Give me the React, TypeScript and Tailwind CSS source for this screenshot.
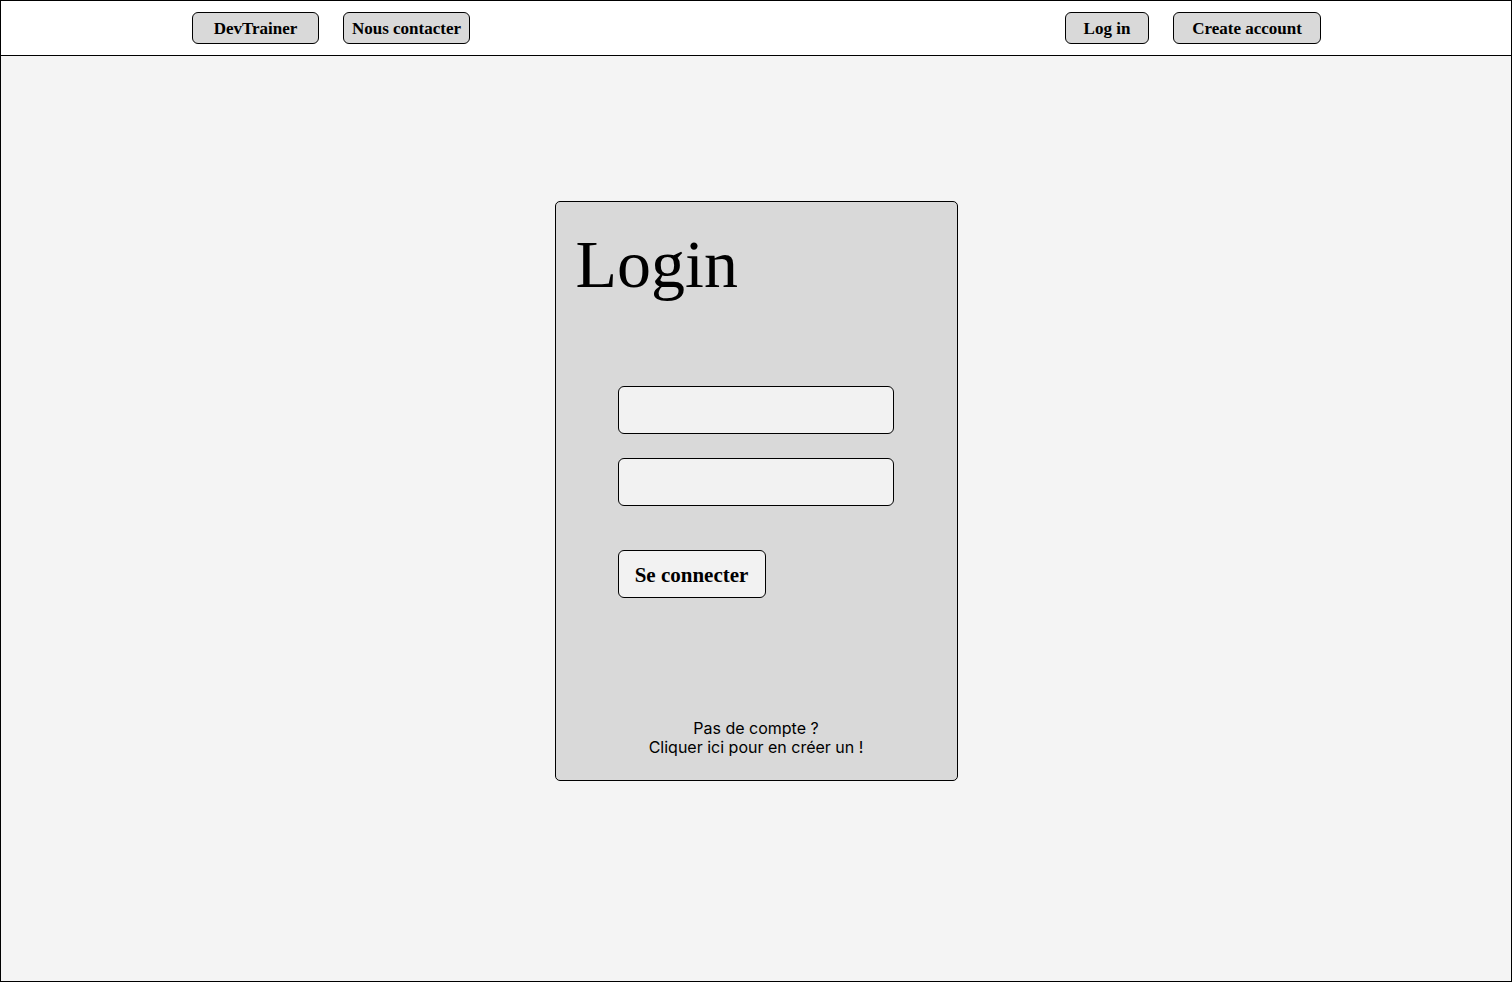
import React from "react";

const serif = "font-['Liberation_Serif','Times_New_Roman',serif]";

function NavButton({ label, width }: { label: string; width: string }) {
    return (
        <button className={`${width} h-8 rounded-md border border-black bg-[#d9d9d9] pt-0.5 text-[17px] font-bold text-black ${serif}`}>
            {label}
        </button>
    );
}

export default function App() {
    return (
        <div className="flex h-[982px] w-[1512px] flex-col border border-black bg-[#f4f4f4]">
            <header className="flex h-[55px] shrink-0 items-center justify-between border-b border-black bg-white pl-[191px] pr-[190px]">
                <div className="flex items-center gap-6">
                    <NavButton label="DevTrainer" width="w-[127px]" />
                    <NavButton label="Nous contacter" width="w-[127px]" />
                </div>
                <div className="flex items-center gap-6">
                    <NavButton label="Log in" width="w-[84px]" />
                    <NavButton label="Create account" width="w-[148px]" />
                </div>
            </header>

            <main className="flex flex-1 justify-center pt-[145px]">
                <div className="flex h-[580px] w-[403px] flex-col rounded-[5px] border border-black bg-[#d9d9d9]">
                    <h1 className={`pl-5 pt-[22px] text-[68px] leading-[80px] text-black ${serif}`}>Login</h1>

                    <div className="mt-[82px] flex flex-col gap-6 pl-[62px]">
                        <input className="h-12 w-[276px] rounded-md border border-black bg-[#f2f2f2] px-3 outline-none" />
                        <input type="password" className="h-12 w-[276px] rounded-md border border-black bg-[#f2f2f2] px-3 outline-none" />
                    </div>

                    <div className="mt-11 pl-[62px]">
                        <button className={`h-12 w-[148px] rounded-md border border-black bg-[#f2f2f2] pt-1 text-[21px] font-bold text-black ${serif}`}>
                            Se connecter
                        </button>
                    </div>

                    <p className="mt-auto pb-[23px] text-center font-['Inter',sans-serif] text-base leading-[19px] text-black">
                        Pas de compte ?
                        <br />
                        Cliquer ici pour en créer un !
                    </p>
                </div>
            </main>
        </div>
    );
}
